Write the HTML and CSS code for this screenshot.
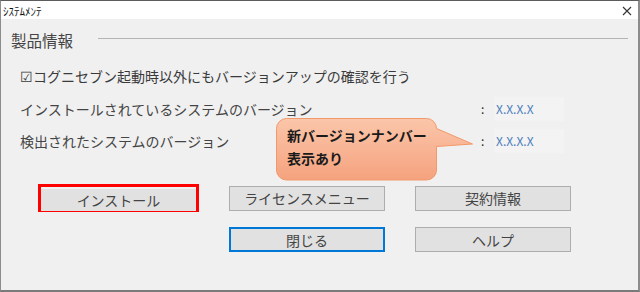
FILE: index.html
```html
<!DOCTYPE html>
<html lang="ja">
<head>
    <meta charset="UTF-8">
    <title>システムメンテ</title>
    <link rel="stylesheet" href="styles.css">
</head>
<body>
    <!-- Jendela dialog -->
    <div class="window">
        <div class="titlebar">
            <span class="title">ｼｽﾃﾑﾒﾝﾃ</span>
            <svg class="close" width="10" height="10" viewBox="0 0 10 10">
                <path d="M1 1 L9 9 M9 1 L1 9" stroke="#333" stroke-width="1.1" fill="none"/>
            </svg>
        </div>

        <div class="content">
            <div class="section-head">
                <span class="section-title">製品情報</span>
                <div class="rule"></div>
            </div>

            <div class="check">☑コグニセブン起動時以外にもバージョンアップの確認を行う</div>

            <div class="info-row">
                <span class="label">インストールされているシステムのバージョン</span>
                <span class="colon">:</span>
                <span class="value">X.X.X.X</span>
            </div>

            <div class="info-row detected">
                <span class="label">検出されたシステムのバージョン</span>
                <span class="colon">:</span>
                <span class="value">X.X.X.X</span>

                <!-- Balon keterangan -->
                <div class="callout">
                    <svg class="callout-shape" width="198" height="63" viewBox="0 0 198 63">
                        <defs>
                            <linearGradient id="calloutFill" x1="0" y1="0" x2="0" y2="1">
                                <stop offset="0" stop-color="#fbc6aa"/>
                                <stop offset="1" stop-color="#f5a27e"/>
                            </linearGradient>
                        </defs>
                        <path d="M10.5,0.5 H150.5 A10,10 0 0 1 160.5,10.5 L196.5,26 L160.5,28.5 V52 A10,10 0 0 1 150.5,62 H10.5 A10,10 0 0 1 0.5,52 V10.5 A10,10 0 0 1 10.5,0.5 Z"
                              fill="url(#calloutFill)" stroke="#f1996a" stroke-width="1"/>
                    </svg>
                    <div class="callout-text">新バージョンナンバー<br>表示あり</div>
                </div>
            </div>

            <div class="buttons">
                <div class="highlight"><button class="btn">インストール</button></div>
                <button class="btn">ライセンスメニュー</button>
                <button class="btn">契約情報</button>
                <button class="btn focused col2">閉じる</button>
                <button class="btn">ヘルプ</button>
            </div>
        </div>
    </div>
</body>
</html>
```

FILE: styles.css
```css
/* Reset */
* {
    margin: 0;
    padding: 0;
    box-sizing: border-box;
}

body {
    width: 640px;
    height: 292px;
    overflow: hidden;
    font-family: "Noto Sans CJK JP", "Noto Sans", sans-serif;
    color: #3a3a3a;
    background: #ffffff;
}

/* Jendela */
.window {
    width: 640px;
    height: 292px;
    background: #f0f0f0;
    border-left: 1px solid #8c8c8c;
    border-right: 2px solid #8c8c8c;
    border-bottom: 2px solid #7a7a7a;
    border-top: 1px solid #5c5c5c;
    display: flex;
    flex-direction: column;
}

.titlebar {
    height: 18px;
    background: #ffffff;
    display: flex;
    align-items: center;
    justify-content: space-between;
    padding: 0 6px 0 2px;
}

.title {
    font-size: 11px;
    color: #111;
    line-height: 1;
    padding-top: 2px;
}

.close {
    margin-top: 1px;
}

.content {
    flex: 1;
    position: relative;
}

/* Judul bagian */
.section-head {
    display: flex;
    align-items: center;
    height: 20px;
    margin-top: 11px;
    padding: 0 10px;
}

.section-title {
    font-size: 15.5px;
    color: #444;
    line-height: 20px;
}

.rule {
    flex: 1;
    height: 1px;
    background: #b4b4b4;
    margin-left: 25px;
    margin-top: -3px;
}

.check {
    font-size: 14px;
    line-height: 22px;
    height: 22px;
    margin-top: 15px;
    padding-left: 19px;
    color: #3a3a3a;
}

/* Baris versi */
.info-row {
    display: grid;
    grid-template-columns: 461px 13px 70px;
    align-items: center;
    height: 22px;
    margin-top: 10px;
    padding-left: 19px;
    font-size: 14px;
    line-height: 22px;
}

.label {
    color: #444;
}

.colon {
    color: #222;
    font-size: 12px;
}

.value {
    color: #4a7dbe;
    font-size: 12px;
    background: #f3f3f3;
    padding-left: 2px;
    height: 24px;
    line-height: 24px;
}

.detected {
    position: relative;
}

/* Balon keterangan */
.callout {
    position: absolute;
    left: 275px;
    top: -11px;
    width: 198px;
    height: 63px;
}

.callout-shape {
    position: absolute;
    left: 0;
    top: 0;
}

.callout-text {
    position: relative;
    padding: 6px 0 0 11px;
    font-size: 14px;
    font-weight: bold;
    line-height: 23px;
    color: #1a1a1a;
}

/* Tombol */
.buttons {
    display: grid;
    grid-template-columns: 161px 156px 156px;
    column-gap: 30px;
    row-gap: 15px;
    align-items: center;
    margin-top: 33px;
    padding-left: 37px;
}

.btn {
    width: 156px;
    height: 25px;
    background: #e1e1e1;
    border: 1px solid #adadad;
    font-family: "Noto Sans CJK JP", "Noto Sans", sans-serif;
    font-size: 14px;
    color: #444;
    line-height: 22px;
}

.highlight {
    width: 161px;
    height: 28px;
    border: 3px solid #ff0000;
}

.highlight .btn {
    width: 100%;
    height: 100%;
    border: none;
}

.focused {
    border: 2px solid #0078d7;
}

.col2 {
    grid-column: 2;
}
```
